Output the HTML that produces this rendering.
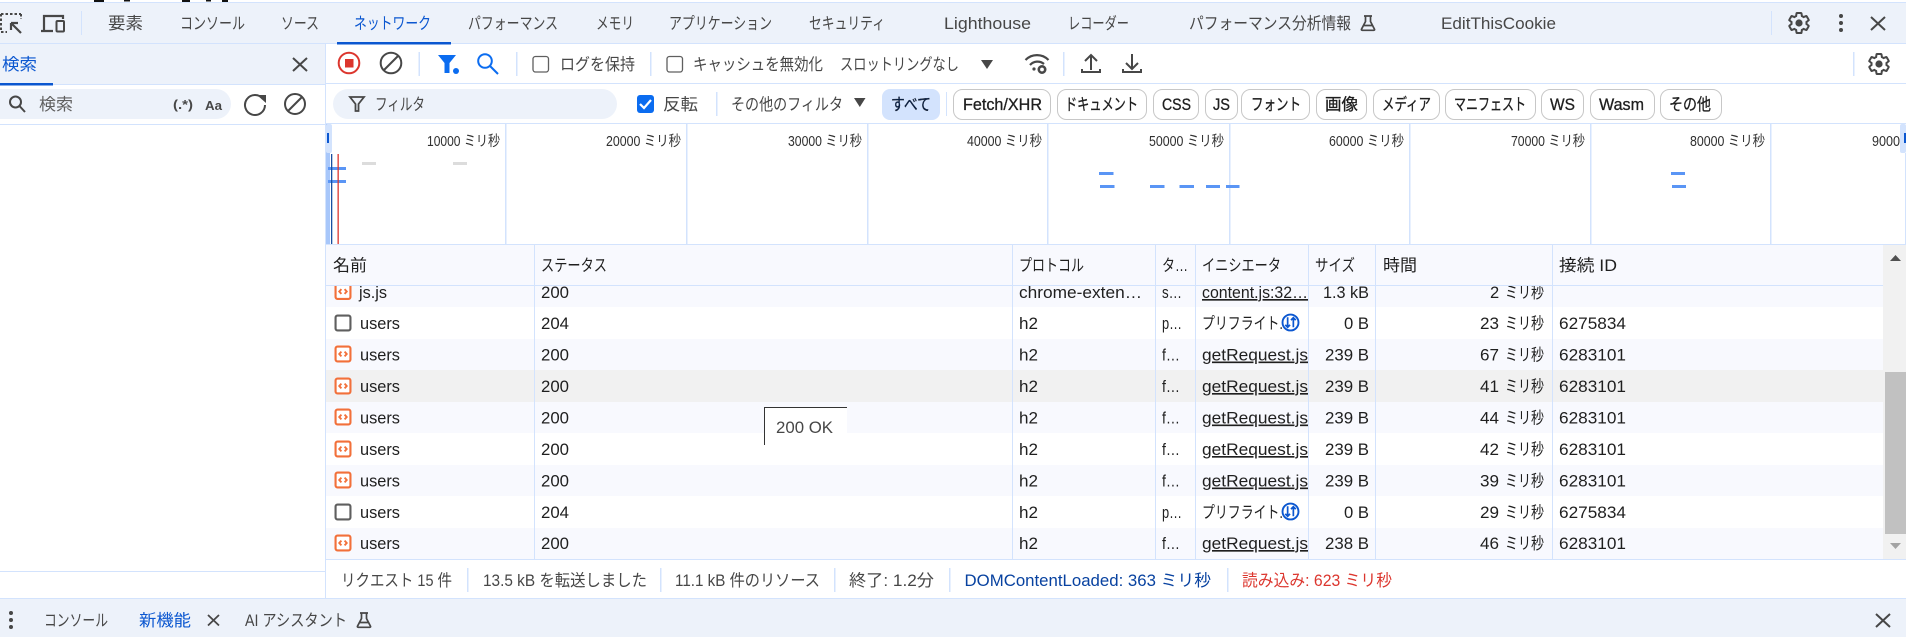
<!DOCTYPE html>
<html lang="ja"><head><meta charset="utf-8"><title>DevTools</title>
<style>
html,body{margin:0;padding:0;background:#fff;width:1906px;height:637px;overflow:hidden}
svg{display:block}
text{font-family:"Liberation Sans","Noto Sans CJK JP",sans-serif;font-size:16.5px;fill:#474747;white-space:pre}
.d{fill:#1f1f1f}
.ov{font-size:14.5px;fill:#303030}
.chip{fill:#1f1f1f;stroke:#1f1f1f;stroke-width:.3px}
.blue{fill:#0b57d0}
.u{text-decoration:underline}
.ln{fill:#d3e3fd}
.ic{fill:none;stroke:#474747;stroke-width:2}
</style></head><body>
<svg width="1906" height="637" viewBox="0 0 1906 637" xmlns="http://www.w3.org/2000/svg">
<defs>
<symbol id="gear" viewBox="0 0 24 24"><path fill="none" stroke="#474747" stroke-width="2" d="M19.43 12.98c.04-.32.07-.64.07-.98s-.03-.66-.07-.98l2.11-1.65c.19-.15.24-.42.12-.64l-2-3.46c-.12-.22-.39-.3-.61-.22l-2.49 1c-.52-.4-1.08-.73-1.69-.98l-.38-2.65C14.46 2.18 14.25 2 14 2h-4c-.25 0-.46.18-.49.42l-.38 2.65c-.61.25-1.17.59-1.69.98l-2.49-1c-.23-.09-.49 0-.61.22l-2 3.46c-.13.22-.07.49.12.64l2.11 1.65c-.04.32-.07.65-.07.98s.03.66.07.98l-2.11 1.65c-.19.15-.24.42-.12.64l2 3.46c.12.22.39.3.61.22l2.49-1c.52.4 1.08.73 1.69.98l.38 2.65c.03.24.24.42.49.42h4c.25 0 .46-.18.49-.42l.38-2.65c.61-.25 1.17-.59 1.69-.98l2.49 1c.23.09.49 0 .61-.22l2-3.46c.12-.22.07-.49-.12-.64l-2.11-1.65z"/><circle cx="12" cy="12" r="3.6" fill="#474747"/></symbol>
<symbol id="flask" viewBox="0 0 18 18"><path fill="none" stroke="#474747" stroke-width="1.7" d="M5 2h8M6.5 2v5.5L2.5 15.2c-.3.6 0 1.1.7 1.1h11.600c.7 0 1-.5.7-1.1L11.500 7.500V2M5 11.500h8"/></symbol>
<symbol id="doc" viewBox="0 0 16 16"><rect x="1" y="1" width="14" height="14" rx="1.800" fill="#fff" stroke="#f2703a" stroke-width="2"/><path fill="none" stroke="#f2703a" stroke-width="1.800" d="M6.500 5.800 4.500 8l2 2.200M9.500 5.800 11.500 8l-2 2.200"/></symbol>
<symbol id="box" viewBox="0 0 16 16"><rect x="1" y="1" width="14" height="14" rx="1.800" fill="none" stroke="#5f5f5f" stroke-width="2"/></symbol>
<symbol id="pf" viewBox="0 0 20 20"><circle cx="10" cy="10" r="8.400" fill="#fff" stroke="#0b57d0" stroke-width="2"/><path fill="none" stroke="#0b57d0" stroke-width="1.800" d="M7 4.500V15M4.500 12.500 7 15l2.500-2.500M13 15V5M10.500 7.500 13 5l2.500 2.500"/></symbol>
</defs>

<rect width="1906" height="637" fill="#fff"/>
<!-- top sliver -->
<g fill="#111"><rect x="94" y="0" width="10" height="2"/><rect x="124" y="0" width="6" height="1.500"/><rect x="182" y="0" width="8" height="2"/><rect x="206" y="0" width="5" height="1.500"/><rect x="222" y="0" width="6" height="2"/></g>

<!-- main tab bar -->
<rect x="0" y="3" width="1906" height="41" fill="#edf2fa"/>
<rect x="0" y="2" width="1906" height="1" class="ln"/>
<rect x="0" y="43" width="1906" height="1" class="ln"/>
<path fill="none" stroke="#474747" stroke-width="2" stroke-dasharray="2.500 2" d="M1 14h20M1 14v18M1 32h6M21 14v5"/>
<path fill="none" stroke="#474747" stroke-width="2.200" d="M11 23h7M11 23v7M11.500 23.500 21 33"/>
<path fill="none" stroke="#474747" stroke-width="2.200" d="M44 31V16h19v3M41 31h12"/>
<rect x="56.500" y="21" width="7.500" height="10.500" rx="1" fill="none" stroke="#474747" stroke-width="2"/>
<rect x="81" y="11" width="1" height="24" class="ln"/>
<g>
<text x="108" y="29" textLength="35" lengthAdjust="spacingAndGlyphs">要素</text>
<text x="180" y="29" textLength="65" lengthAdjust="spacingAndGlyphs">コンソール</text>
<text x="281" y="29" textLength="38" lengthAdjust="spacingAndGlyphs">ソース</text>
<text x="354" y="29" textLength="77" lengthAdjust="spacingAndGlyphs" class="blue">ネットワーク</text>
<text x="468" y="29" textLength="90" lengthAdjust="spacingAndGlyphs">パフォーマンス</text>
<text x="596" y="29" textLength="38" lengthAdjust="spacingAndGlyphs">メモリ</text>
<text x="669" y="29" textLength="103" lengthAdjust="spacingAndGlyphs">アプリケーション</text>
<text x="809" y="29" textLength="76" lengthAdjust="spacingAndGlyphs">セキュリティ</text>
<text x="944" y="29" textLength="87" lengthAdjust="spacingAndGlyphs">Lighthouse</text>
<text x="1068" y="29" textLength="61" lengthAdjust="spacingAndGlyphs">レコーダー</text>
<text x="1189" y="29" textLength="162" lengthAdjust="spacingAndGlyphs">パフォーマンス分析情報</text>
<text x="1441" y="29" textLength="115" lengthAdjust="spacingAndGlyphs">EditThisCookie</text>
</g>
<rect x="337" y="42" width="114" height="2.500" fill="#0b57d0"/>
<use href="#flask" x="1359" y="14" width="18" height="18"/>
<rect x="1771" y="11" width="1" height="24" class="ln"/>
<use href="#gear" x="1787" y="11" width="24" height="24"/>
<g fill="#474747"><circle cx="1841" cy="16" r="2"/><circle cx="1841" cy="23" r="2"/><circle cx="1841" cy="30" r="2"/></g>
<path fill="none" stroke="#474747" stroke-width="2" d="M1871 17l14 13M1885 17l-14 13"/>

<!-- left panel -->
<rect x="0" y="44" width="325" height="40" fill="#edf2fa"/>
<rect x="0" y="84" width="325" height="1" class="ln"/>
<text x="2" y="70" textLength="35" lengthAdjust="spacingAndGlyphs" class="blue">検索</text>
<rect x="0" y="83" width="53" height="2.500" fill="#0b57d0"/>
<path fill="none" stroke="#474747" stroke-width="2" d="M293 58l14 13M307 58l-14 13"/>
<rect x="-20" y="89" width="251" height="30" rx="15" fill="#edf2fa"/>
<circle cx="15.500" cy="102" r="5.500" class="ic"/><path class="ic" d="M19.500 106l5.500 6"/>
<text x="39" y="110" textLength="34" lengthAdjust="spacingAndGlyphs" style="fill:#5f5f5f">検索</text>
<text x="173" y="109" textLength="20" lengthAdjust="spacingAndGlyphs" style="font-size:13px;font-weight:700">(.*)</text>
<text x="205" y="110" textLength="17" lengthAdjust="spacingAndGlyphs" style="font-size:13px;font-weight:700">Aa</text>
<path class="ic" d="M263 99a10 10 0 1 0 2 6"/><path fill="#474747" d="M257 95h9v8z"/>
<circle cx="295" cy="104" r="10" class="ic"/><path class="ic" d="M288 111l14-14"/>
<rect x="0" y="124" width="325" height="1" class="ln"/>
<rect x="0" y="571" width="325" height="1" class="ln"/>
<rect x="325" y="44" width="1" height="555" class="ln"/>

<!-- network toolbar -->
<circle cx="349" cy="63" r="10.300" fill="none" stroke="#dc362e" stroke-width="2"/>
<rect x="345" y="59" width="8.500" height="8.500" fill="#dc362e"/>
<circle cx="391" cy="63" r="10.300" class="ic"/><path class="ic" d="M384 70l14-14"/>
<rect x="418.500" y="52" width="1.500" height="24" class="ln"/>
<path fill="#0b6cf0" d="M438 55h18l-6.500 8v10h-5V63z"/><circle cx="456" cy="71" r="3" fill="#0b6cf0"/>
<circle cx="485" cy="61" r="6.800" fill="none" stroke="#0b6cf0" stroke-width="2"/><path fill="none" stroke="#0b6cf0" stroke-width="2" d="M490 66l8 8"/>
<rect x="516" y="52" width="1.500" height="24" class="ln"/>
<rect x="533" y="56.500" width="15.500" height="15.500" rx="2.500" fill="#fff" stroke="#5f5f5f" stroke-width="1.300"/>
<text x="560" y="70" textLength="75" lengthAdjust="spacingAndGlyphs">ログを保持</text>
<rect x="650" y="52" width="1.500" height="24" class="ln"/>
<rect x="667" y="56.500" width="15.500" height="15.500" rx="2.500" fill="#fff" stroke="#5f5f5f" stroke-width="1.300"/>
<text x="693" y="70" textLength="130" lengthAdjust="spacingAndGlyphs">キャッシュを無効化</text>
<text x="840" y="70" textLength="119" lengthAdjust="spacingAndGlyphs">スロットリングなし</text>
<path fill="#474747" d="M981 60h12l-6 9z"/>
<path fill="none" stroke="#474747" stroke-width="2.200" d="M1025.500 60a16 16 0 0 1 23 0M1030 65a10 10 0 0 1 14-1"/><circle cx="1034" cy="69" r="1.600" fill="#474747"/>
<circle cx="1042" cy="69.500" r="3.200" fill="none" stroke="#474747" stroke-width="2.600"/>
<rect x="1063" y="52" width="1.500" height="24" class="ln"/>
<path class="ic" d="M1091 70V55M1085 61l6-6 6 6M1082 69v3h18v-3"/>
<path class="ic" d="M1132 54v15M1126 63l6 6 6-6M1123 69v3h18v-3"/>
<rect x="1853" y="52" width="1.500" height="24" class="ln"/>
<use href="#gear" x="1867" y="52" width="24" height="24"/>
<rect x="326" y="83" width="1580" height="1" class="ln"/>

<!-- filter row -->
<rect x="333" y="89" width="284" height="30" rx="15" fill="#edf2fa"/>
<path fill="none" stroke="#474747" stroke-width="1.800" d="M350 97h14l-5.500 7v7h-3v-7z"/>
<text x="375" y="110" textLength="50" lengthAdjust="spacingAndGlyphs">フィルタ</text>
<rect x="637" y="95" width="17" height="18" rx="3" fill="#0b6cf0"/>
<path fill="none" stroke="#fff" stroke-width="2.200" d="M640 104l4 4 7-8"/>
<text x="663" y="110" textLength="35" lengthAdjust="spacingAndGlyphs">反転</text>
<rect x="716" y="92" width="1.500" height="24" class="ln"/>
<text x="731" y="110" textLength="112" lengthAdjust="spacingAndGlyphs">その他のフィルタ</text>
<path fill="#474747" d="M854 98h11.500l-5.700 9z"/>
<rect x="882" y="89" width="58" height="31" rx="8" fill="#d3e3fd"/>
<text x="891" y="110" textLength="40" lengthAdjust="spacingAndGlyphs" class="chip" style="fill:#041e49">すべて</text>
<rect x="946" y="92" width="1" height="24" class="ln"/>
<g fill="#fff" stroke="#c7c7c7" stroke-width="1">
<rect x="953.500" y="89.500" width="97" height="30" rx="9"/>
<rect x="1057.500" y="89.500" width="89" height="30" rx="9"/>
<rect x="1153.500" y="89.500" width="45" height="30" rx="9"/>
<rect x="1205.500" y="89.500" width="32" height="30" rx="9"/>
<rect x="1241.500" y="89.500" width="68" height="30" rx="9"/>
<rect x="1316.500" y="89.500" width="50" height="30" rx="9"/>
<rect x="1373.500" y="89.500" width="66" height="30" rx="9"/>
<rect x="1445.500" y="89.500" width="90" height="30" rx="9"/>
<rect x="1541.500" y="89.500" width="42" height="30" rx="9"/>
<rect x="1590.500" y="89.500" width="64" height="30" rx="9"/>
<rect x="1660.500" y="89.500" width="61" height="30" rx="9"/>
</g>
<text class="chip" x="963" y="110" textLength="79" lengthAdjust="spacingAndGlyphs">Fetch/XHR</text>
<text class="chip" x="1065" y="110" textLength="73" lengthAdjust="spacingAndGlyphs">ドキュメント</text>
<text class="chip" x="1162" y="110" textLength="29" lengthAdjust="spacingAndGlyphs">CSS</text>
<text class="chip" x="1213" y="110" textLength="17" lengthAdjust="spacingAndGlyphs">JS</text>
<text class="chip" x="1251" y="110" textLength="50" lengthAdjust="spacingAndGlyphs">フォント</text>
<text class="chip" x="1325" y="110" textLength="33" lengthAdjust="spacingAndGlyphs">画像</text>
<text class="chip" x="1382" y="110" textLength="49" lengthAdjust="spacingAndGlyphs">メディア</text>
<text class="chip" x="1454" y="110" textLength="72" lengthAdjust="spacingAndGlyphs">マニフェスト</text>
<text class="chip" x="1550" y="110" textLength="25" lengthAdjust="spacingAndGlyphs">WS</text>
<text class="chip" x="1599" y="110" textLength="45" lengthAdjust="spacingAndGlyphs">Wasm</text>
<text class="chip" x="1669" y="110" textLength="42" lengthAdjust="spacingAndGlyphs">その他</text>
<rect x="326" y="123" width="1580" height="1" class="ln"/>

<!-- overview -->
<g class="ln">
<rect x="505" y="124" width="1.500" height="120"/><rect x="686" y="124" width="1.500" height="120"/><rect x="867" y="124" width="1.500" height="120"/><rect x="1047" y="124" width="1.500" height="120"/><rect x="1229" y="124" width="1.500" height="120"/><rect x="1409" y="124" width="1.500" height="120"/><rect x="1590" y="124" width="1.500" height="120"/><rect x="1770" y="124" width="1.500" height="120"/>
</g>
<rect x="326" y="124" width="4" height="120" fill="#a8c7fa"/>
<rect x="326" y="124" width="6" height="29" rx="2" fill="#d3e3fd"/>
<rect x="327" y="133" width="2" height="10" fill="#0b57d0"/>
<rect x="1900" y="124" width="6" height="29" rx="2" fill="#d3e3fd"/>
<rect x="1904" y="133" width="2" height="10" fill="#0b57d0"/>
<rect x="1905" y="153" width="1" height="91" class="ln"/>
<text class="ov" x="427" y="146" textLength="73" lengthAdjust="spacingAndGlyphs">10000 ミリ秒</text>
<text class="ov" x="606" y="146" textLength="75" lengthAdjust="spacingAndGlyphs">20000 ミリ秒</text>
<text class="ov" x="788" y="146" textLength="74" lengthAdjust="spacingAndGlyphs">30000 ミリ秒</text>
<text class="ov" x="967" y="146" textLength="75" lengthAdjust="spacingAndGlyphs">40000 ミリ秒</text>
<text class="ov" x="1149" y="146" textLength="75" lengthAdjust="spacingAndGlyphs">50000 ミリ秒</text>
<text class="ov" x="1329" y="146" textLength="75" lengthAdjust="spacingAndGlyphs">60000 ミリ秒</text>
<text class="ov" x="1511" y="146" textLength="74" lengthAdjust="spacingAndGlyphs">70000 ミリ秒</text>
<text class="ov" x="1690" y="146" textLength="75" lengthAdjust="spacingAndGlyphs">80000 ミリ秒</text>
<text class="ov" x="1872" y="146" textLength="28" lengthAdjust="spacingAndGlyphs">9000</text>
<g fill="#dcdcdc"><rect x="362" y="162" width="14" height="3"/><rect x="453" y="162" width="14" height="3"/></g>
<g fill="#5a95f5">
<rect x="328" y="167" width="18" height="3"/><rect x="328" y="180" width="18" height="3"/>
<rect x="1099" y="172" width="14.500" height="3"/><rect x="1100" y="185" width="14.500" height="3"/>
<rect x="1150" y="185" width="14.500" height="3"/><rect x="1179.500" y="185" width="14.500" height="3"/><rect x="1206" y="185" width="14" height="3"/><rect x="1226" y="185" width="13.500" height="3"/>
<rect x="1671" y="172" width="14" height="3"/><rect x="1672" y="185" width="14" height="3"/>
</g>
<rect x="331" y="154" width="1.300" height="90" fill="#1a4fa0"/>
<rect x="337.500" y="154" width="1.300" height="90" fill="#dc362e"/>

<!-- table rows -->
<rect x="326" y="285" width="1557" height="22" fill="#f8f9fe"/>
<rect x="326" y="339" width="1557" height="31" fill="#f8f9fe"/>
<rect x="326" y="370" width="1557" height="32" fill="#f1f1f1"/>
<rect x="326" y="402" width="1557" height="31" fill="#f8f9fe"/>
<rect x="326" y="465" width="1557" height="31" fill="#f8f9fe"/>
<rect x="326" y="528" width="1557" height="31" fill="#f8f9fe"/>

<use href="#doc" x="334.500" y="283" width="17" height="17"/>
<use href="#box" x="334.500" y="314.500" width="17" height="17"/>
<use href="#doc" x="334.500" y="345.500" width="17" height="17"/>
<use href="#doc" x="334.500" y="377.500" width="17" height="17"/>
<use href="#doc" x="334.500" y="408.500" width="17" height="17"/>
<use href="#doc" x="334.500" y="440.500" width="17" height="17"/>
<use href="#doc" x="334.500" y="471.500" width="17" height="17"/>
<use href="#box" x="334.500" y="503.500" width="17" height="17"/>
<use href="#doc" x="334.500" y="534.500" width="17" height="17"/>

<g class="rows">
<!-- row 1 -->
<text class="d" x="359" y="298" textLength="28" lengthAdjust="spacingAndGlyphs">js.js</text>
<text class="d" x="541" y="298" textLength="28" lengthAdjust="spacingAndGlyphs">200</text>
<text class="d" x="1019" y="298" textLength="123" lengthAdjust="spacingAndGlyphs">chrome-exten…</text>
<text class="d" x="1162" y="298" textLength="20" lengthAdjust="spacingAndGlyphs">s…</text>
<text class="d u" x="1202" y="298" textLength="106" lengthAdjust="spacingAndGlyphs">content.js:32…</text>
<text class="d" x="1323" y="298" textLength="46" lengthAdjust="spacingAndGlyphs">1.3 kB</text>
<text class="d" x="1490" y="298">2</text><text class="d" x="1505" y="298" textLength="39" lengthAdjust="spacingAndGlyphs">ミリ秒</text>
<!-- row 2 -->
<text class="d" x="360" y="329" textLength="40" lengthAdjust="spacingAndGlyphs">users</text>
<text class="d" x="541" y="329" textLength="28" lengthAdjust="spacingAndGlyphs">204</text>
<text class="d" x="1019" y="329" textLength="19" lengthAdjust="spacingAndGlyphs">h2</text>
<text class="d" x="1162" y="329" textLength="20" lengthAdjust="spacingAndGlyphs">p…</text>
<text class="d" x="1202" y="329" textLength="81" lengthAdjust="spacingAndGlyphs">プリフライト.</text>
<use href="#pf" x="1281" y="313" width="19" height="19"/>
<text class="d" x="1344" y="329" textLength="25" lengthAdjust="spacingAndGlyphs">0 B</text>
<text class="d" x="1480" y="329" textLength="19" lengthAdjust="spacingAndGlyphs">23</text><text class="d" x="1505" y="329" textLength="39" lengthAdjust="spacingAndGlyphs">ミリ秒</text>
<text class="d" x="1559" y="329" textLength="67" lengthAdjust="spacingAndGlyphs">6275834</text>
<!-- row 3 -->
<text class="d" x="360" y="360.500" textLength="40" lengthAdjust="spacingAndGlyphs">users</text>
<text class="d" x="541" y="360.500" textLength="28" lengthAdjust="spacingAndGlyphs">200</text>
<text class="d" x="1019" y="360.500" textLength="19" lengthAdjust="spacingAndGlyphs">h2</text>
<text class="d" x="1162" y="360.500" textLength="18" lengthAdjust="spacingAndGlyphs">f…</text>
<text class="d u" x="1202" y="360.500" textLength="106" lengthAdjust="spacingAndGlyphs">getRequest.js</text>
<text class="d" x="1325" y="360.500" textLength="44" lengthAdjust="spacingAndGlyphs">239 B</text>
<text class="d" x="1480" y="360.500" textLength="19" lengthAdjust="spacingAndGlyphs">67</text><text class="d" x="1505" y="360.500" textLength="39" lengthAdjust="spacingAndGlyphs">ミリ秒</text>
<text class="d" x="1559" y="360.500" textLength="67" lengthAdjust="spacingAndGlyphs">6283101</text>
<!-- row 4 -->
<text class="d" x="360" y="392" textLength="40" lengthAdjust="spacingAndGlyphs">users</text>
<text class="d" x="541" y="392" textLength="28" lengthAdjust="spacingAndGlyphs">200</text>
<text class="d" x="1019" y="392" textLength="19" lengthAdjust="spacingAndGlyphs">h2</text>
<text class="d" x="1162" y="392" textLength="18" lengthAdjust="spacingAndGlyphs">f…</text>
<text class="d u" x="1202" y="392" textLength="106" lengthAdjust="spacingAndGlyphs">getRequest.js</text>
<text class="d" x="1325" y="392" textLength="44" lengthAdjust="spacingAndGlyphs">239 B</text>
<text class="d" x="1480" y="392" textLength="19" lengthAdjust="spacingAndGlyphs">41</text><text class="d" x="1505" y="392" textLength="39" lengthAdjust="spacingAndGlyphs">ミリ秒</text>
<text class="d" x="1559" y="392" textLength="67" lengthAdjust="spacingAndGlyphs">6283101</text>
<!-- row 5 -->
<text class="d" x="360" y="423.500" textLength="40" lengthAdjust="spacingAndGlyphs">users</text>
<text class="d" x="541" y="423.500" textLength="28" lengthAdjust="spacingAndGlyphs">200</text>
<text class="d" x="1019" y="423.500" textLength="19" lengthAdjust="spacingAndGlyphs">h2</text>
<text class="d" x="1162" y="423.500" textLength="18" lengthAdjust="spacingAndGlyphs">f…</text>
<text class="d u" x="1202" y="423.500" textLength="106" lengthAdjust="spacingAndGlyphs">getRequest.js</text>
<text class="d" x="1325" y="423.500" textLength="44" lengthAdjust="spacingAndGlyphs">239 B</text>
<text class="d" x="1480" y="423.500" textLength="19" lengthAdjust="spacingAndGlyphs">44</text><text class="d" x="1505" y="423.500" textLength="39" lengthAdjust="spacingAndGlyphs">ミリ秒</text>
<text class="d" x="1559" y="423.500" textLength="67" lengthAdjust="spacingAndGlyphs">6283101</text>
<!-- row 6 -->
<text class="d" x="360" y="455" textLength="40" lengthAdjust="spacingAndGlyphs">users</text>
<text class="d" x="541" y="455" textLength="28" lengthAdjust="spacingAndGlyphs">200</text>
<text class="d" x="1019" y="455" textLength="19" lengthAdjust="spacingAndGlyphs">h2</text>
<text class="d" x="1162" y="455" textLength="18" lengthAdjust="spacingAndGlyphs">f…</text>
<text class="d u" x="1202" y="455" textLength="106" lengthAdjust="spacingAndGlyphs">getRequest.js</text>
<text class="d" x="1325" y="455" textLength="44" lengthAdjust="spacingAndGlyphs">239 B</text>
<text class="d" x="1480" y="455" textLength="19" lengthAdjust="spacingAndGlyphs">42</text><text class="d" x="1505" y="455" textLength="39" lengthAdjust="spacingAndGlyphs">ミリ秒</text>
<text class="d" x="1559" y="455" textLength="67" lengthAdjust="spacingAndGlyphs">6283101</text>
<!-- row 7 -->
<text class="d" x="360" y="486.500" textLength="40" lengthAdjust="spacingAndGlyphs">users</text>
<text class="d" x="541" y="486.500" textLength="28" lengthAdjust="spacingAndGlyphs">200</text>
<text class="d" x="1019" y="486.500" textLength="19" lengthAdjust="spacingAndGlyphs">h2</text>
<text class="d" x="1162" y="486.500" textLength="18" lengthAdjust="spacingAndGlyphs">f…</text>
<text class="d u" x="1202" y="486.500" textLength="106" lengthAdjust="spacingAndGlyphs">getRequest.js</text>
<text class="d" x="1325" y="486.500" textLength="44" lengthAdjust="spacingAndGlyphs">239 B</text>
<text class="d" x="1480" y="486.500" textLength="19" lengthAdjust="spacingAndGlyphs">39</text><text class="d" x="1505" y="486.500" textLength="39" lengthAdjust="spacingAndGlyphs">ミリ秒</text>
<text class="d" x="1559" y="486.500" textLength="67" lengthAdjust="spacingAndGlyphs">6283101</text>
<!-- row 8 -->
<text class="d" x="360" y="518" textLength="40" lengthAdjust="spacingAndGlyphs">users</text>
<text class="d" x="541" y="518" textLength="28" lengthAdjust="spacingAndGlyphs">204</text>
<text class="d" x="1019" y="518" textLength="19" lengthAdjust="spacingAndGlyphs">h2</text>
<text class="d" x="1162" y="518" textLength="20" lengthAdjust="spacingAndGlyphs">p…</text>
<text class="d" x="1202" y="518" textLength="81" lengthAdjust="spacingAndGlyphs">プリフライト.</text>
<use href="#pf" x="1281" y="502" width="19" height="19"/>
<text class="d" x="1344" y="518" textLength="25" lengthAdjust="spacingAndGlyphs">0 B</text>
<text class="d" x="1480" y="518" textLength="19" lengthAdjust="spacingAndGlyphs">29</text><text class="d" x="1505" y="518" textLength="39" lengthAdjust="spacingAndGlyphs">ミリ秒</text>
<text class="d" x="1559" y="518" textLength="67" lengthAdjust="spacingAndGlyphs">6275834</text>
<!-- row 9 -->
<text class="d" x="360" y="549" textLength="40" lengthAdjust="spacingAndGlyphs">users</text>
<text class="d" x="541" y="549" textLength="28" lengthAdjust="spacingAndGlyphs">200</text>
<text class="d" x="1019" y="549" textLength="19" lengthAdjust="spacingAndGlyphs">h2</text>
<text class="d" x="1162" y="549" textLength="18" lengthAdjust="spacingAndGlyphs">f…</text>
<text class="d u" x="1202" y="549" textLength="106" lengthAdjust="spacingAndGlyphs">getRequest.js</text>
<text class="d" x="1325" y="549" textLength="44" lengthAdjust="spacingAndGlyphs">238 B</text>
<text class="d" x="1480" y="549" textLength="19" lengthAdjust="spacingAndGlyphs">46</text><text class="d" x="1505" y="549" textLength="39" lengthAdjust="spacingAndGlyphs">ミリ秒</text>
<text class="d" x="1559" y="549" textLength="67" lengthAdjust="spacingAndGlyphs">6283101</text>
</g>

<!-- table header -->
<rect x="326" y="244" width="1557" height="41" fill="#f8f9fe"/>
<rect x="325" y="244" width="1581" height="1" class="ln"/>
<rect x="326" y="285" width="1557" height="1" class="ln"/>
<text class="d" x="333" y="271" textLength="34" lengthAdjust="spacingAndGlyphs">名前</text>
<text class="d" x="541" y="271" textLength="66" lengthAdjust="spacingAndGlyphs">ステータス</text>
<text class="d" x="1019" y="271" textLength="65" lengthAdjust="spacingAndGlyphs">プロトコル</text>
<text class="d" x="1162" y="271" textLength="26" lengthAdjust="spacingAndGlyphs">タ…</text>
<text class="d" x="1202" y="271" textLength="79" lengthAdjust="spacingAndGlyphs">イニシエータ</text>
<text class="d" x="1315" y="271" textLength="40" lengthAdjust="spacingAndGlyphs">サイズ</text>
<text class="d" x="1383" y="271" textLength="34" lengthAdjust="spacingAndGlyphs">時間</text>
<text class="d" x="1559" y="271" textLength="58" lengthAdjust="spacingAndGlyphs">接続 ID</text>
<g class="ln">
<rect x="534" y="245" width="1" height="314"/><rect x="1012" y="245" width="1" height="314"/><rect x="1155" y="245" width="1" height="314"/><rect x="1195" y="245" width="1" height="314"/><rect x="1308" y="245" width="1" height="314"/><rect x="1375" y="245" width="1" height="314"/><rect x="1552" y="245" width="1" height="314"/>
</g>

<!-- tooltip -->
<rect x="765" y="407" width="82" height="26" fill="#fff"/>
<path fill="none" stroke="#333" stroke-width="1" d="M764.500 445V407.500H847"/>
<text x="776" y="433" textLength="57" lengthAdjust="spacingAndGlyphs">200 OK</text>

<!-- scrollbar -->
<rect x="1883" y="245" width="23" height="314" fill="#f1f1f1"/>
<rect x="1885" y="372" width="21" height="162" fill="#c1c1c1"/>
<path fill="#505050" d="M1890 261l5.500-6 5.500 6z"/>
<path fill="#a3a3a3" d="M1890 543l5.500 6 5.500-6z"/>

<!-- status bar -->
<rect x="326" y="559" width="1580" height="1" class="ln"/>
<text x="341" y="586" textLength="111" lengthAdjust="spacingAndGlyphs">リクエスト 15 件</text>
<rect x="467" y="568" width="1.500" height="24" class="ln"/>
<text x="483" y="586" textLength="164" lengthAdjust="spacingAndGlyphs">13.5 kB を転送しました</text>
<rect x="660" y="568" width="1.500" height="24" class="ln"/>
<text x="675" y="586" textLength="145" lengthAdjust="spacingAndGlyphs">11.1 kB 件のリソース</text>
<rect x="834" y="568" width="1.500" height="24" class="ln"/>
<text x="849" y="586" textLength="85" lengthAdjust="spacingAndGlyphs">終了: 1.2分</text>
<rect x="949" y="568" width="1.500" height="24" class="ln"/>
<text x="964.500" y="586" textLength="246.500" lengthAdjust="spacingAndGlyphs" style="fill:#0842a0">DOMContentLoaded: 363 ミリ秒</text>
<rect x="1227" y="568" width="1.500" height="24" class="ln"/>
<text x="1242" y="586" textLength="150" lengthAdjust="spacingAndGlyphs" style="fill:#dc362e">読み込み: 623 ミリ秒</text>

<!-- bottom drawer -->
<rect x="0" y="599" width="1906" height="38" fill="#edf2fa"/>
<rect x="0" y="598" width="1906" height="1" class="ln"/>
<g fill="#474747"><circle cx="11" cy="613" r="2"/><circle cx="11" cy="620" r="2"/><circle cx="11" cy="627" r="2"/></g>
<text x="44" y="626" textLength="64" lengthAdjust="spacingAndGlyphs">コンソール</text>
<text x="139" y="626" textLength="52" lengthAdjust="spacingAndGlyphs" class="blue">新機能</text>
<path fill="none" stroke="#474747" stroke-width="1.800" d="M208 615l11 10.500M219 615l-11 10.500"/>
<text x="245" y="626" textLength="102" lengthAdjust="spacingAndGlyphs">AI アシスタント</text>
<use href="#flask" x="355" y="611" width="18" height="18"/>
<path fill="none" stroke="#474747" stroke-width="2" d="M1876 614l14 13M1890 614l-14 13"/>
</svg>
</body></html>
